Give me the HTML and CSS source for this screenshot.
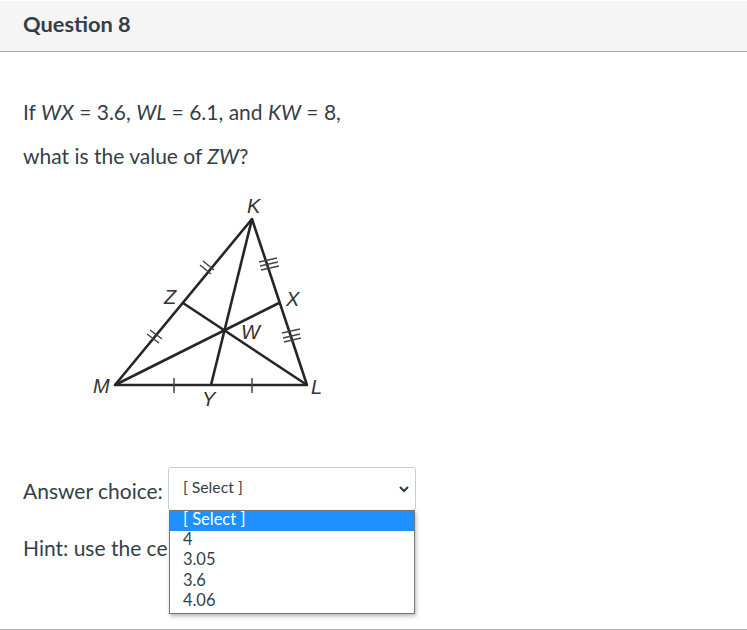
FILE: index.html
```html
<!DOCTYPE html>
<html lang="en">
<head>
<meta charset="utf-8">
<title>Question 8</title>
<link rel="stylesheet" href="styles.css">
</head>
<body>
<div class="quiz">
  <header class="head"><h2 class="title">Question 8</h2></header>
  <main class="content">
    <p class="line">If <em>WX</em> = 3.6, <em>WL</em> = 6.1, and <em>KW</em> = 8,</p>
    <p class="line">what is the value of <em>ZW</em>?</p>
    <svg class="figure" width="260" height="225" viewBox="80 190 260 225" aria-label="Triangle KLM with medians meeting at W">
      <g class="sides">
        <path d="M252 219 L115 385 L307 385 Z"/>
        <path d="M252 219 L211 385"/>
        <path d="M115 385 L279 303"/>
        <path d="M183 303 L307 385"/>
      </g>
      <g class="ticks">
        <path d="M203 261 L214 270 M200 265 L211 274"/>
        <path d="M147 334 L159 343 M150 330 L162 339"/>
        <path d="M259 262 L277 258 M260 266 L278 262 M261 270 L279 266"/>
        <path d="M282 333 L300 329 M283 338 L300 334 M284 342 L301 338"/>
        <path d="M174 378 L174 393 M252 378 L252 393"/>
      </g>
      <g class="labels">
        <text x="247" y="213">K</text>
        <text x="164" y="304">Z</text>
        <text x="286" y="306">X</text>
        <text x="241" y="339">W</text>
        <text x="93" y="393">M</text>
        <text x="311" y="394">L</text>
        <text x="202" y="406">Y</text>
      </g>
    </svg>
    <div class="answer">
      <span class="answer-label">Answer choice:</span>
      <div class="picker">
        <div class="select">
          <span>[ Select ]</span>
          <svg class="chevron" width="10" height="7" viewBox="0 0 10 7"><path d="M1 1 L5 5 L9 1"/></svg>
        </div>
        <ul class="menu">
          <li class="option selected">[ Select ]</li>
          <li class="option">4</li>
          <li class="option">3.05</li>
          <li class="option">3.6</li>
          <li class="option">4.06</li>
        </ul>
      </div>
    </div>
    <p class="hint">Hint: use the ce</p>
  </main>
</div>
</body>
</html>
```
FILE: styles.css
```css
html, body {
  margin: 0;
  padding: 0;
  background: #fff;
}
body {
  font-family: Lato, "Liberation Sans", sans-serif;
  color: #333f48;
  overflow: hidden;
}
.quiz {
  width: 747px;
  height: 629px;
  border-bottom: 1px solid #b5b5b5;
  overflow: hidden;
}
.head {
  height: 50px;
  margin-top: 1px;
  background: #f5f5f5;
  border-bottom: 1px solid #a8a8a8;
  padding-left: 23px;
  display: flex;
  align-items: center;
}
.title {
  margin: 0 0 4px;
  font-size: 21.8px;
  font-weight: 700;
  line-height: 30px;
}
.content {
  padding: 45px 23px 0;
}
.line {
  margin: 0 0 14px;
  font-size: 21px;
  line-height: 30px;
}
.figure {
  display: block;
  margin: 19px 0 0 57px;
}
.sides path {
  fill: none;
  stroke: #262626;
  stroke-width: 2.6;
  stroke-linejoin: round;
}
.ticks path {
  fill: none;
  stroke: #444;
  stroke-width: 1.5;
}
.labels text {
  font-family: "Liberation Sans", sans-serif;
  font-style: italic;
  font-size: 20px;
  fill: #333;
}
.answer {
  display: flex;
  align-items: center;
  gap: 5px;
  margin-top: 52px;
  height: 44px;
}
.answer-label {
  font-size: 21px;
  line-height: 30px;
  margin-top: 3px;
}
.picker {
  position: relative;
  width: 248px;
}
.select {
  box-sizing: border-box;
  height: 44px;
  border: 1px solid #c7cdd1;
  border-radius: 3px;
  padding: 0 6px 5px 14px;
  display: flex;
  align-items: center;
  justify-content: space-between;
  font-size: 15.8px;
  background: #fff;
}
.chevron {
  margin-top: 5px;
}
.chevron path {
  fill: none;
  stroke: #2d3b45;
  stroke-width: 2;
}
.menu {
  position: absolute;
  top: 43px;
  left: 1px;
  width: 246px;
  box-sizing: border-box;
  margin: 0;
  padding: 0 0 1px;
  list-style: none;
  background: #fff;
  border: 1px solid #767676;
  box-shadow: 1px 2px 4px rgba(0, 0, 0, 0.3);
  font-size: 16.5px;
}
.option {
  height: 20.2px;
  line-height: 17px;
  padding-left: 13px;
}
.selected {
  background: #1e90ff;
  color: #fff;
}
.hint {
  margin: 22px 0 0;
  font-size: 21px;
  line-height: 30px;
  white-space: nowrap;
}
```
